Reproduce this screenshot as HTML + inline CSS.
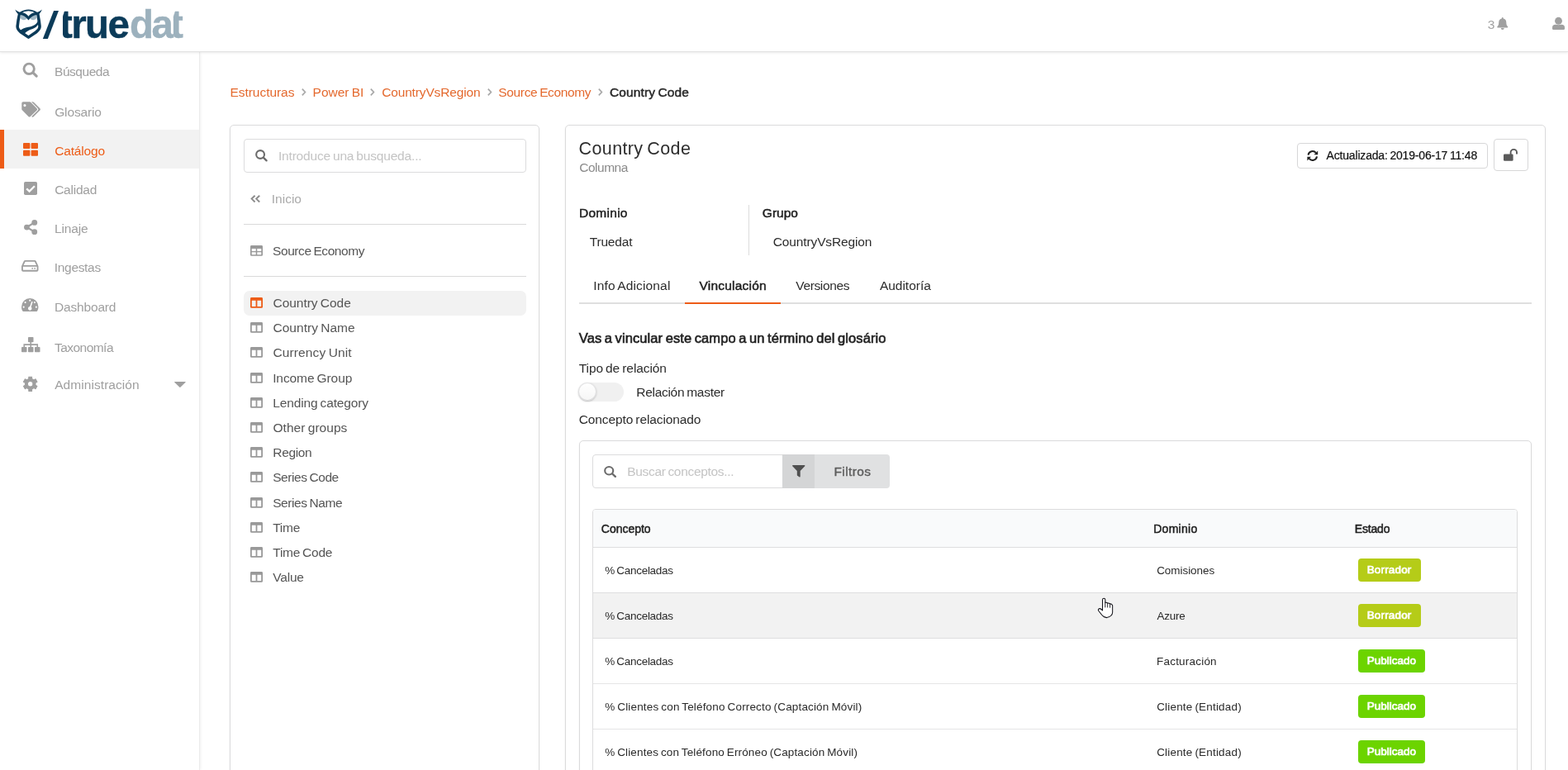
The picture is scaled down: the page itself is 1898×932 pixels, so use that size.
<!DOCTYPE html>
<html lang="es"><head><meta charset="utf-8"><title>truedat - Country Code</title>
<style>
*{box-sizing:border-box}
html,body{margin:0;padding:0;overflow:hidden}
#app{position:absolute;left:0;top:0;width:1898px;height:932px;overflow:hidden;will-change:transform}
body{width:1898px;height:932px;overflow:hidden;position:relative;background:#fff;font-family:'Liberation Sans',sans-serif;color:#222;-webkit-font-smoothing:antialiased}
ul,li,h1,h2,p,table,tr,td,th,thead,tbody,nav,header,main,section,aside,a,label,button{margin:0;padding:0;border:0;background:none;font:inherit;color:inherit;text-decoration:none;list-style:none;display:block;position:static}
.t{position:absolute;white-space:nowrap;line-height:1;display:block;word-spacing:-0.07em}
.b{position:absolute;display:block}
.i{position:absolute;display:block;fill:currentColor;overflow:visible}
.seg{background:#fff;border:1px solid #dbdbdc;border-radius:5px;box-shadow:0 1px 2px 0 rgba(34,36,38,.08)}
.inp{background:#fff;border:1px solid #dcdcdd;border-radius:4px}
.hl{background:#d9d9da}
</style></head>
<body>
<div id="app">
<nav><div class="b" style="left:0px;top:63px;width:241px;height:869px;border-right:1px solid #ececec;width:242px;box-shadow:1px 0 3px rgba(0,0,0,.06);background:#fff;"></div><div class="b" style="left:0px;top:157px;width:241px;height:47px;background:#f2f2f2;border-left:5px solid #ed5c17;"></div><ul><li><a><svg class="i" style="left:27.5px;top:76.2px;width:18.0px;height:18.0px;color:#9f9f9f;" viewBox="0 0 18 18" preserveAspectRatio="none" aria-hidden="true"><circle cx="7.15" cy="7.3" r="6.2" fill="none" stroke="currentColor" stroke-width="2.9"/><path d="M12.1 12.1 L16.2 16.2" stroke="currentColor" stroke-width="3.1" stroke-linecap="round"/></svg><span class="t" style="left:66.02px;top:79px;font-size:15.5px;letter-spacing:-0.46px;color:#9f9f9f;">Búsqueda</span></a></li><li><a><svg class="i" style="left:25.5px;top:122.8px;width:23.0px;height:18.3px;color:#9f9f9f;" viewBox="0 0 23 18" preserveAspectRatio="none" aria-hidden="true"><path fill-rule="evenodd" fill="currentColor" d="M.3 1.8 A1.6 1.6 0 0 1 1.9 .2 H10 a1.7 1.7 0 0 1 1.2 .5 L18.6 8 a1.7 1.7 0 0 1 0 2.4 L10.8 17.7 a1.7 1.7 0 0 1 -2.4 0 L.8 10.1 A1.7 1.7 0 0 1 .3 8.9 Z M3.95 2.9 a1.6 1.6 0 1 0 0 3.2 a1.6 1.6 0 1 0 0 -3.2 Z"/><path fill="currentColor" d="M12 .2 h1.7 a1.7 1.7 0 0 1 1.2 .5 L22.4 8 a1.7 1.7 0 0 1 0 2.4 L14.9 17.7 a1.7 1.7 0 0 1 -2.6 -.1 L19.7 10.6 a2 2 0 0 0 0 -2.8 Z"/></svg><span class="t" style="left:66.16px;top:128px;font-size:15.5px;letter-spacing:-0.13px;color:#9f9f9f;">Glosario</span></a></li><li><a><svg class="i" style="left:27.5px;top:173.2px;width:18.0px;height:15.8px;color:#ed5c17;" viewBox="0 0 18 16" preserveAspectRatio="none" aria-hidden="true"><rect x="0" y="0" width="8.4" height="7.2" rx="1"/><rect x="9.6" y="0" width="8.4" height="7.2" rx="1"/><rect x="0" y="8.8" width="8.4" height="7.2" rx="1"/><rect x="9.6" y="8.8" width="8.4" height="7.2" rx="1"/></svg><span class="t" style="left:66.17px;top:175px;font-size:15.5px;letter-spacing:-0.17px;color:#ed5c17;">Catálogo</span></a></li><li><a><svg class="i" style="left:29px;top:220px;width:16.0px;height:16.0px;color:#9f9f9f;" viewBox="0 0 16 16" preserveAspectRatio="none" aria-hidden="true"><rect x="0" y="0" width="16" height="16" rx="1.8" fill="currentColor"/><path d="M3.2 8.3 L6.6 11.6 L12.9 5.2" fill="none" stroke="#fff" stroke-width="2.3"/></svg><span class="t" style="left:66.17px;top:222px;font-size:15.5px;letter-spacing:-0.24px;color:#9f9f9f;">Calidad</span></a></li><li><a><svg class="i" style="left:28.8px;top:266px;width:16.2px;height:18.1px;color:#9f9f9f;" viewBox="0 0 16 18" preserveAspectRatio="none" aria-hidden="true"><circle cx="3.4" cy="9" r="3.4"/><circle cx="12.6" cy="3.4" r="3.4"/><circle cx="12.6" cy="14.6" r="3.4"/><path d="M3.4 9 L12.6 3.4 M3.4 9 L12.6 14.6" stroke="currentColor" stroke-width="2.2" fill="none"/></svg><span class="t" style="left:66.02px;top:269px;font-size:15.5px;letter-spacing:-0.17px;color:#9f9f9f;">Linaje</span></a></li><li><a><svg class="i" style="left:26.2px;top:315.2px;width:20.5px;height:13.7px;color:#9f9f9f;" viewBox="0 0 21 14" preserveAspectRatio="none" aria-hidden="true"><path fill-rule="evenodd" d="M4.6 0 H16.4 a2 2 0 0 1 1.7 1 L20.7 6.6 a2.2 2.2 0 0 1 .3 1 V12 a2 2 0 0 1 -2 2 H2 a2 2 0 0 1 -2 -2 V7.6 a2.2 2.2 0 0 1 .3 -1 L2.9 1 A2 2 0 0 1 4.6 0 Z M4.9 1.9 a.4.4 0 0 0 -.3 .2 L2.6 6.1 H18.4 L16.4 2.1 a.4.4 0 0 0 -.3 -.2 Z M1.9 8 V11.8 a.3.3 0 0 0 .3 .3 H18.8 a.3.3 0 0 0 .3 -.3 V8 Z M13.5 9.1 a1 1 0 1 0 0 2 a1 1 0 1 0 0 -2 Z M16.5 9.1 a1 1 0 1 0 0 2 a1 1 0 1 0 0 -2 Z"/></svg><span class="t" style="left:65.85px;top:316px;font-size:15.5px;letter-spacing:-0.33px;color:#9f9f9f;">Ingestas</span></a></li><li><a><svg class="i" style="left:26.2px;top:361.2px;width:20.5px;height:16.0px;color:#9f9f9f;" viewBox="0 0 21 16" preserveAspectRatio="none" aria-hidden="true"><path fill-rule="evenodd" d="M10.5 0 A10.5 10.5 0 0 0 0 10.5 c0 1.9 .5 3.6 1.4 5.1 a.9.9 0 0 0 .8 .4 H18.8 a.9.9 0 0 0 .8 -.4 A10 10 0 0 0 21 10.5 A10.5 10.5 0 0 0 10.5 0 Z M10.5 1.6 a1.1 1.1 0 1 1 0 2.2 a1.1 1.1 0 1 1 0 -2.2 Z M4.7 4 a1.1 1.1 0 1 1 0 2.2 a1.1 1.1 0 1 1 0 -2.2 Z M16.3 4 a1.1 1.1 0 1 1 0 2.2 a1.1 1.1 0 1 1 0 -2.2 Z M2.7 9.6 a1.1 1.1 0 1 1 0 2.2 a1.1 1.1 0 1 1 0 -2.2 Z M18.3 9.6 a1.1 1.1 0 1 1 0 2.2 a1.1 1.1 0 1 1 0 -2.2 Z M12.4 4.3 a.8.8 0 0 1 1.5 .5 L11.9 10.6 a2.3 2.3 0 1 1 -1.5 -.5 Z"/></svg><span class="t" style="left:66.02px;top:364px;font-size:15.5px;letter-spacing:-0.17px;color:#9f9f9f;">Dashboard</span></a></li><li><a><svg class="i" style="left:25.8px;top:407.9px;width:22.5px;height:18.3px;color:#9f9f9f;" viewBox="0 0 22.5 18" preserveAspectRatio="none" aria-hidden="true"><rect x="8" y="0" width="6.5" height="6.2" rx=".8"/><rect x="0" y="11.8" width="6.5" height="6.2" rx=".8"/><rect x="8" y="11.8" width="6.5" height="6.2" rx=".8"/><rect x="16" y="11.8" width="6.5" height="6.2" rx=".8"/><path d="M11.25 6 V12 M3.25 12 V9 H19.25 V12" fill="none" stroke="currentColor" stroke-width="1.6"/></svg><span class="t" style="left:65.94px;top:413px;font-size:15.5px;letter-spacing:-0.53px;color:#9f9f9f;">Taxonomía</span></a></li><li><a><svg class="i" style="left:27.9px;top:456.4px;width:17.4px;height:17.6px;color:#9f9f9f;" viewBox="0 0 17.5 17.5" preserveAspectRatio="none" aria-hidden="true"><path fill-rule="evenodd" stroke="currentColor" stroke-width="1" stroke-linejoin="round" d="M6.78 0.22 L10.72 0.22 L10.65 2.53 L13.18 4.00 L15.15 2.78 L17.12 6.19 L15.08 7.29 L15.08 10.21 L17.12 11.31 L15.15 14.72 L13.18 13.50 L10.65 14.97 L10.72 17.28 L6.78 17.28 L6.85 14.97 L4.32 13.50 L2.35 14.72 L0.38 11.31 L2.42 10.21 L2.42 7.29 L0.38 6.19 L2.35 2.78 L4.32 4.00 L6.85 2.53 Z M8.75 5.55 a3.2 3.2 0 1 0 0 6.4 a3.2 3.2 0 1 0 0 -6.4 Z"/></svg><span class="t" style="left:66.23px;top:458px;font-size:15.5px;letter-spacing:0.06px;color:#9f9f9f;">Administración</span></a></li></ul><svg class="i" style="left:211.2px;top:461.9px;width:13.8px;height:7.0px;color:#9f9f9f;" viewBox="0 0 14 7" preserveAspectRatio="none" aria-hidden="true"><path d="M.6 0 H13.4 a.5.5 0 0 1 .35 .85 L7.4 6.8 a.55.55 0 0 1 -.8 0 L.25 .85 A.5.5 0 0 1 .6 0 Z"/></svg></nav>
<header><div class="b" style="left:0px;top:0px;width:1898px;height:62px;background:#fff;border-bottom:1px solid #e2e2e2;height:63px;box-shadow:0 1px 3px rgba(0,0,0,.09);"></div><svg class="i" style="left:17.8px;top:10.7px;width:33.2px;height:36.5px;" viewBox="140 120 595 655" preserveAspectRatio="none" aria-hidden="true"><g fill="#0b3b59"><path fill="none" stroke="#0b3b59" stroke-width="64" stroke-linejoin="round" d="M242 222 C219 320 204 410 196 495 C194 545 229 588 273 622 L435 732 L597 622 C641 588 681 545 679 495 C671 410 656 320 636 222"/><path fill="none" stroke="#0b3b59" stroke-width="34" d="M245 209 Q435 80 625 209"/><path d="M145 130 C185 165 220 185 264 192 L232 252 C195 218 165 178 145 130 Z M730 130 C690 165 655 185 611 192 L643 252 C680 218 710 178 730 130 Z"/><path fill="#a3b9c6" d="M255 250 L415 250 L415 300 C400 340 360 358 330 356 C290 354 262 330 255 290 Z M615 250 L455 250 L455 300 C470 340 510 358 540 356 C580 354 608 330 615 290 Z"/><path d="M248 193 C330 188 395 223 435 278 C475 223 540 188 627 193 L632 246 C550 244 490 284 435 364 C380 284 320 244 243 246 Z"/><path d="M642 370 C612 462 520 494 430 509 C350 524 288 550 236 600 L345 655 C400 597 452 568 512 553 C584 533 636 488 662 420 Z"/></g></svg><span class="t" style="left:55.44px;top:8px;font-size:45.5px;font-weight:700;color:#0b3b59;transform:skewX(-10deg) scaleX(1.12);transform-origin:50% 50%;">/</span><span class="t" style="left:72.12px;top:6px;font-size:47.5px;font-weight:700;letter-spacing:-1.68px;color:#0b3b59;-webkit-text-stroke:0.4px #0b3b59;clip-path:inset(-5px -5px -5px 3.9px);">true</span><span class="t" style="left:156.9px;top:6px;font-size:47.5px;font-weight:700;letter-spacing:-2.45px;color:#9cb1bd;-webkit-text-stroke:0.4px #9cb1bd;">da<span style="display:inline-block;margin-left:-1.5px;clip-path:inset(-5px -5px -5px 3.9px);">t</span></span><span class="t" style="left:1800.73px;top:22px;font-size:15.5px;color:#a3a3a3;">3</span><svg class="i" style="left:1812px;top:21px;width:13.5px;height:15.0px;color:#a0a0a0;" viewBox="0 0 14 15" preserveAspectRatio="none" aria-hidden="true"><path d="M7 0 a1 1 0 0 1 1 1 v.5 a4.7 4.7 0 0 1 3.7 4.5 c0 2.9 .7 3.9 1.8 5 a.95.95 0 0 1 -.7 1.6 H1.2 a.95.95 0 0 1 -.7 -1.6 C1.6 9.9 2.3 8.9 2.3 6 A4.7 4.7 0 0 1 6 1.5 V1 a1 1 0 0 1 1 -1 Z M5 12.9 h4 a2 2 0 0 1 -4 0 Z"/></svg><svg class="i" style="left:1879px;top:21px;width:15.0px;height:15.0px;color:#a0a0a0;" viewBox="0 0 15 15" preserveAspectRatio="none" aria-hidden="true"><path d="M0 13.4 v-.9 a3.7 3.7 0 0 1 3.7 -3.7 h7.6 a3.7 3.7 0 0 1 3.7 3.7 v.9 a1.5 1.5 0 0 1 -1.5 1.5 h-12 a1.5 1.5 0 0 1 -1.5 -1.5 z"/><circle cx="7.5" cy="4.3" r="4.9" fill="#fff"/><circle cx="7.5" cy="4.3" r="4.45"/></svg></header>
<main>
<nav><a class="t" style="left:278.52px;top:104px;font-size:15.5px;letter-spacing:-0.05px;color:#e4692e;">Estructuras</a><a class="t" style="left:378.62px;top:104px;font-size:15.5px;letter-spacing:-0.01px;color:#e4692e;">Power BI</a><a class="t" style="left:462.17px;top:104px;font-size:15.5px;letter-spacing:-0.15px;color:#e4692e;">CountryVsRegion</a><a class="t" style="left:603.33px;top:104px;font-size:15.5px;letter-spacing:-0.36px;color:#e4692e;">Source Economy</a><svg class="i" style="left:365px;top:107.2px;width:5.4px;height:9.0px;color:#a8a8a8;" viewBox="0 0 5.4 9" preserveAspectRatio="none" aria-hidden="true"><path fill="none" stroke="currentColor" stroke-width="1.7" d="M.8 .7 L4.4 4.5 L.8 8.3"/></svg><svg class="i" style="left:448.3px;top:107.2px;width:5.4px;height:9.0px;color:#a8a8a8;" viewBox="0 0 5.4 9" preserveAspectRatio="none" aria-hidden="true"><path fill="none" stroke="currentColor" stroke-width="1.7" d="M.8 .7 L4.4 4.5 L.8 8.3"/></svg><svg class="i" style="left:589.5px;top:107.2px;width:5.4px;height:9.0px;color:#a8a8a8;" viewBox="0 0 5.4 9" preserveAspectRatio="none" aria-hidden="true"><path fill="none" stroke="currentColor" stroke-width="1.7" d="M.8 .7 L4.4 4.5 L.8 8.3"/></svg><svg class="i" style="left:724px;top:107.2px;width:5.4px;height:9.0px;color:#a8a8a8;" viewBox="0 0 5.4 9" preserveAspectRatio="none" aria-hidden="true"><path fill="none" stroke="currentColor" stroke-width="1.7" d="M.8 .7 L4.4 4.5 L.8 8.3"/></svg><span class="t" style="left:737.97px;top:104px;font-size:15.5px;letter-spacing:0.13px;color:#2a2a2a;-webkit-text-stroke:0.5px #2a2a2a;">Country Code</span></nav>
<aside><div class="b seg" style="left:278px;top:151px;width:375px;height:809px;"></div><div class="b inp" style="left:295px;top:168px;width:342px;height:41px;"></div><svg class="i" style="left:309px;top:181.2px;width:15.0px;height:14.8px;color:#6c6c6c;" viewBox="0 0 18 18" preserveAspectRatio="none" aria-hidden="true"><circle cx="7.3" cy="7.3" r="5.9" fill="none" stroke="currentColor" stroke-width="2.5"/><path d="M12 12 L16.3 16.3" stroke="currentColor" stroke-width="2.8" stroke-linecap="round"/></svg><span class="t" style="left:336.95px;top:181px;font-size:15.5px;letter-spacing:-0.18px;color:#c4c4c4;">Introduce una busqueda...</span><svg class="i" style="left:303.3px;top:235.8px;width:12.4px;height:9.2px;color:#8c8c8c;" viewBox="0 0 12.4 9.2" preserveAspectRatio="none" aria-hidden="true"><path fill="none" stroke="currentColor" stroke-width="1.9" d="M5.6 .7 L1.6 4.6 L5.6 8.5 M11.2 .7 L7.2 4.6 L11.2 8.5"/></svg><a class="t" style="left:328.75px;top:233px;font-size:15.5px;letter-spacing:0.01px;color:#aaa;">Inicio</a><div class="b hl" style="left:295px;top:271px;width:342px;height:1px;"></div><svg class="i" style="left:302.8px;top:297px;width:15.0px;height:12.8px;color:#999;" viewBox="0 0 15 13" preserveAspectRatio="none" aria-hidden="true"><path fill-rule="evenodd" d="M1.4 0 H13.6 A1.4 1.4 0 0 1 15 1.4 V11.6 A1.4 1.4 0 0 1 13.6 13 H1.4 A1.4 1.4 0 0 1 0 11.6 V1.4 A1.4 1.4 0 0 1 1.4 0 Z M1.7 4 V7 H6.7 V4 Z M8.3 4 V7 H13.3 V4 Z M1.7 8.5 V11.4 H6.7 V8.5 Z M8.3 8.5 V11.4 H13.3 V8.5 Z"/></svg><a class="t" style="left:330.03px;top:296px;font-size:15.5px;letter-spacing:-0.42px;color:#555;">Source Economy</a><div class="b hl" style="left:295px;top:334px;width:342px;height:1px;"></div><div class="b" style="left:295px;top:352px;width:342px;height:30px;background:#f2f2f2;border-radius:7px;"></div><ul><li><svg class="i" style="left:302.8px;top:360px;width:15.0px;height:12.8px;color:#ed5c17;" viewBox="0 0 15 13" preserveAspectRatio="none" aria-hidden="true"><path fill-rule="evenodd" d="M1.4 0 H13.6 A1.4 1.4 0 0 1 15 1.4 V11.6 A1.4 1.4 0 0 1 13.6 13 H1.4 A1.4 1.4 0 0 1 0 11.6 V1.4 A1.4 1.4 0 0 1 1.4 0 Z M1.8 3.7 V11.2 H6.6 V3.7 Z M8.4 3.7 V11.2 H13.2 V3.7 Z"/></svg><a class="t" style="left:330.47px;top:359px;font-size:15.5px;letter-spacing:-0.02px;color:#555;">Country Code</a></li><li><svg class="i" style="left:302.8px;top:390px;width:15.0px;height:12.8px;color:#999;" viewBox="0 0 15 13" preserveAspectRatio="none" aria-hidden="true"><path fill-rule="evenodd" d="M1.4 0 H13.6 A1.4 1.4 0 0 1 15 1.4 V11.6 A1.4 1.4 0 0 1 13.6 13 H1.4 A1.4 1.4 0 0 1 0 11.6 V1.4 A1.4 1.4 0 0 1 1.4 0 Z M1.8 3.7 V11.2 H6.6 V3.7 Z M8.4 3.7 V11.2 H13.2 V3.7 Z"/></svg><a class="t" style="left:330.47px;top:389px;font-size:15.5px;letter-spacing:0.03px;color:#555;">Country Name</a></li><li><svg class="i" style="left:302.8px;top:420px;width:15.0px;height:12.8px;color:#999;" viewBox="0 0 15 13" preserveAspectRatio="none" aria-hidden="true"><path fill-rule="evenodd" d="M1.4 0 H13.6 A1.4 1.4 0 0 1 15 1.4 V11.6 A1.4 1.4 0 0 1 13.6 13 H1.4 A1.4 1.4 0 0 1 0 11.6 V1.4 A1.4 1.4 0 0 1 1.4 0 Z M1.8 3.7 V11.2 H6.6 V3.7 Z M8.4 3.7 V11.2 H13.2 V3.7 Z"/></svg><a class="t" style="left:330.47px;top:419px;font-size:15.5px;letter-spacing:0.12px;color:#555;">Currency Unit</a></li><li><svg class="i" style="left:302.8px;top:451px;width:15.0px;height:12.8px;color:#999;" viewBox="0 0 15 13" preserveAspectRatio="none" aria-hidden="true"><path fill-rule="evenodd" d="M1.4 0 H13.6 A1.4 1.4 0 0 1 15 1.4 V11.6 A1.4 1.4 0 0 1 13.6 13 H1.4 A1.4 1.4 0 0 1 0 11.6 V1.4 A1.4 1.4 0 0 1 1.4 0 Z M1.8 3.7 V11.2 H6.6 V3.7 Z M8.4 3.7 V11.2 H13.2 V3.7 Z"/></svg><a class="t" style="left:330.15px;top:450px;font-size:15.5px;letter-spacing:-0.09px;color:#555;">Income Group</a></li><li><svg class="i" style="left:302.8px;top:481px;width:15.0px;height:12.8px;color:#999;" viewBox="0 0 15 13" preserveAspectRatio="none" aria-hidden="true"><path fill-rule="evenodd" d="M1.4 0 H13.6 A1.4 1.4 0 0 1 15 1.4 V11.6 A1.4 1.4 0 0 1 13.6 13 H1.4 A1.4 1.4 0 0 1 0 11.6 V1.4 A1.4 1.4 0 0 1 1.4 0 Z M1.8 3.7 V11.2 H6.6 V3.7 Z M8.4 3.7 V11.2 H13.2 V3.7 Z"/></svg><a class="t" style="left:330.32px;top:480px;font-size:15.5px;letter-spacing:-0.14px;color:#555;">Lending category</a></li><li><svg class="i" style="left:302.8px;top:511px;width:15.0px;height:12.8px;color:#999;" viewBox="0 0 15 13" preserveAspectRatio="none" aria-hidden="true"><path fill-rule="evenodd" d="M1.4 0 H13.6 A1.4 1.4 0 0 1 15 1.4 V11.6 A1.4 1.4 0 0 1 13.6 13 H1.4 A1.4 1.4 0 0 1 0 11.6 V1.4 A1.4 1.4 0 0 1 1.4 0 Z M1.8 3.7 V11.2 H6.6 V3.7 Z M8.4 3.7 V11.2 H13.2 V3.7 Z"/></svg><a class="t" style="left:330.51px;top:510px;font-size:15.5px;letter-spacing:0.04px;color:#555;">Other groups</a></li><li><svg class="i" style="left:302.8px;top:541px;width:15.0px;height:12.8px;color:#999;" viewBox="0 0 15 13" preserveAspectRatio="none" aria-hidden="true"><path fill-rule="evenodd" d="M1.4 0 H13.6 A1.4 1.4 0 0 1 15 1.4 V11.6 A1.4 1.4 0 0 1 13.6 13 H1.4 A1.4 1.4 0 0 1 0 11.6 V1.4 A1.4 1.4 0 0 1 1.4 0 Z M1.8 3.7 V11.2 H6.6 V3.7 Z M8.4 3.7 V11.2 H13.2 V3.7 Z"/></svg><a class="t" style="left:330.32px;top:540px;font-size:15.5px;letter-spacing:-0.37px;color:#555;">Region</a></li><li><svg class="i" style="left:302.8px;top:571px;width:15.0px;height:12.8px;color:#999;" viewBox="0 0 15 13" preserveAspectRatio="none" aria-hidden="true"><path fill-rule="evenodd" d="M1.4 0 H13.6 A1.4 1.4 0 0 1 15 1.4 V11.6 A1.4 1.4 0 0 1 13.6 13 H1.4 A1.4 1.4 0 0 1 0 11.6 V1.4 A1.4 1.4 0 0 1 1.4 0 Z M1.8 3.7 V11.2 H6.6 V3.7 Z M8.4 3.7 V11.2 H13.2 V3.7 Z"/></svg><a class="t" style="left:330.13px;top:570px;font-size:15.5px;letter-spacing:-0.41px;color:#555;">Series Code</a></li><li><svg class="i" style="left:302.8px;top:602px;width:15.0px;height:12.8px;color:#999;" viewBox="0 0 15 13" preserveAspectRatio="none" aria-hidden="true"><path fill-rule="evenodd" d="M1.4 0 H13.6 A1.4 1.4 0 0 1 15 1.4 V11.6 A1.4 1.4 0 0 1 13.6 13 H1.4 A1.4 1.4 0 0 1 0 11.6 V1.4 A1.4 1.4 0 0 1 1.4 0 Z M1.8 3.7 V11.2 H6.6 V3.7 Z M8.4 3.7 V11.2 H13.2 V3.7 Z"/></svg><a class="t" style="left:330.13px;top:601px;font-size:15.5px;letter-spacing:-0.41px;color:#555;">Series Name</a></li><li><svg class="i" style="left:302.8px;top:632px;width:15.0px;height:12.8px;color:#999;" viewBox="0 0 15 13" preserveAspectRatio="none" aria-hidden="true"><path fill-rule="evenodd" d="M1.4 0 H13.6 A1.4 1.4 0 0 1 15 1.4 V11.6 A1.4 1.4 0 0 1 13.6 13 H1.4 A1.4 1.4 0 0 1 0 11.6 V1.4 A1.4 1.4 0 0 1 1.4 0 Z M1.8 3.7 V11.2 H6.6 V3.7 Z M8.4 3.7 V11.2 H13.2 V3.7 Z"/></svg><a class="t" style="left:330.24px;top:631px;font-size:15.5px;letter-spacing:-0.26px;color:#555;">Time</a></li><li><svg class="i" style="left:302.8px;top:662px;width:15.0px;height:12.8px;color:#999;" viewBox="0 0 15 13" preserveAspectRatio="none" aria-hidden="true"><path fill-rule="evenodd" d="M1.4 0 H13.6 A1.4 1.4 0 0 1 15 1.4 V11.6 A1.4 1.4 0 0 1 13.6 13 H1.4 A1.4 1.4 0 0 1 0 11.6 V1.4 A1.4 1.4 0 0 1 1.4 0 Z M1.8 3.7 V11.2 H6.6 V3.7 Z M8.4 3.7 V11.2 H13.2 V3.7 Z"/></svg><a class="t" style="left:330.24px;top:661px;font-size:15.5px;letter-spacing:-0.25px;color:#555;">Time Code</a></li><li><svg class="i" style="left:302.8px;top:692px;width:15.0px;height:12.8px;color:#999;" viewBox="0 0 15 13" preserveAspectRatio="none" aria-hidden="true"><path fill-rule="evenodd" d="M1.4 0 H13.6 A1.4 1.4 0 0 1 15 1.4 V11.6 A1.4 1.4 0 0 1 13.6 13 H1.4 A1.4 1.4 0 0 1 0 11.6 V1.4 A1.4 1.4 0 0 1 1.4 0 Z M1.8 3.7 V11.2 H6.6 V3.7 Z M8.4 3.7 V11.2 H13.2 V3.7 Z"/></svg><a class="t" style="left:330.30px;top:691px;font-size:15.5px;letter-spacing:-0.21px;color:#555;">Value</a></li></ul></aside>
<section><div class="b seg" style="left:684px;top:151px;width:1187px;height:809px;"></div><h1 class="t" style="left:700.55px;top:170px;font-size:21.5px;letter-spacing:0.38px;color:#2e2e2e;">Country Code</h1><span class="t" style="left:701.17px;top:195px;font-size:15.5px;letter-spacing:-0.47px;color:#8a8a8a;">Columna</span><div class="b" style="left:1570px;top:173px;width:231px;height:31px;border:1px solid #d7d7d8;border-radius:4px;background:#fff;"></div><svg class="i" style="left:1581.8px;top:182px;width:13.6px;height:13.0px;color:#222;" viewBox="0 0 14 13" preserveAspectRatio="none" aria-hidden="true"><path fill="none" stroke="currentColor" stroke-width="2.1" d="M1.6 5.6 A5.5 5.5 0 0 1 11.3 3.1 M12.4 7.4 A5.5 5.5 0 0 1 2.7 9.9"/><path d="M13.6 .4 V5.2 H8.8 Z M.4 12.6 V7.8 H5.2 Z"/></svg><span class="t" style="left:1605.55px;top:181px;font-size:14px;letter-spacing:-0.18px;color:#111;-webkit-text-stroke:0.2px #111;">Actualizada: 2019-06-17 11:48</span><div class="b" style="left:1808px;top:168px;width:42px;height:39px;border:1px solid #d7d7d8;border-radius:4px;background:#fff;"></div><svg class="i" style="left:1820.3px;top:180.2px;width:17.0px;height:14.8px;color:#5a5a5a;" viewBox="0 0 17 15" preserveAspectRatio="none" aria-hidden="true"><rect x="0" y="6.6" width="11.6" height="8.4" rx="1.3"/><path fill="none" stroke="currentColor" stroke-width="1.9" d="M8.6 7 V4.6 a3.7 3.7 0 0 1 7.4 0 V6.6"/></svg><span class="t" style="left:701.02px;top:250px;font-size:15.5px;letter-spacing:0.27px;color:#222;-webkit-text-stroke:0.5px #222;">Dominio</span><span class="t" style="left:713.74px;top:285px;font-size:15.5px;letter-spacing:-0.19px;color:#2c2c2c;">Truedat</span><div class="b" style="left:906px;top:248px;width:1px;height:61px;background:#dcdcdc;"></div><span class="t" style="left:922.86px;top:250px;font-size:15.5px;letter-spacing:-0.02px;color:#222;-webkit-text-stroke:0.5px #222;">Grupo</span><span class="t" style="left:935.77px;top:285px;font-size:15.5px;letter-spacing:-0.13px;color:#2c2c2c;">CountryVsRegion</span><div class="b" style="left:701px;top:366px;width:1153px;height:2px;background:#dfdfdf;"></div><div class="b" style="left:829px;top:366px;width:116px;height:2px;background:#ed5c17;"></div><a class="t" style="left:718.25px;top:338px;font-size:15.5px;letter-spacing:0.15px;color:#2c2c2c;">Info Adicional</a><a class="t" style="left:846.60px;top:338px;font-size:15.5px;letter-spacing:0.20px;color:#222;-webkit-text-stroke:0.5px #222;">Vinculación</a><a class="t" style="left:963.30px;top:338px;font-size:15.5px;letter-spacing:-0.36px;color:#2c2c2c;">Versiones</a><a class="t" style="left:1064.93px;top:338px;font-size:15.5px;letter-spacing:-0.02px;color:#2c2c2c;">Auditoría</a><h2 class="t" style="left:700.81px;top:401px;font-size:16.5px;letter-spacing:0.09px;color:#222;-webkit-text-stroke:0.6px #222;">Vas a vincular este campo a un término del glosário</h2><label class="t" style="left:700.74px;top:438px;font-size:15.5px;letter-spacing:-0.09px;color:#2c2c2c;">Tipo de relación</label><div class="b" style="left:700.4px;top:463.3px;width:54.6px;height:22.5px;background:#f0f0f0;border-radius:11.5px;"></div><div class="b" style="left:700.2px;top:463.3px;width:22.2px;height:22.2px;background:linear-gradient(#fff,#f6f6f6);border-radius:50%;box-shadow:0 1px 2px rgba(34,36,38,.25),0 0 0 1px rgba(34,36,38,.12) inset;"></div><label class="t" style="left:770.22px;top:467px;font-size:15.5px;letter-spacing:-0.28px;color:#2c2c2c;">Relación master</label><label class="t" style="left:700.67px;top:500px;font-size:15.5px;letter-spacing:-0.10px;color:#2c2c2c;">Concepto relacionado</label><div class="b seg" style="left:701px;top:533px;width:1153px;height:427px;"></div><div class="b inp" style="left:717px;top:550px;width:231px;height:41px;border-radius:4px 0 0 4px;"></div><svg class="i" style="left:731px;top:563.5px;width:15.3px;height:14.2px;color:#6c6c6c;" viewBox="0 0 18 18" preserveAspectRatio="none" aria-hidden="true"><circle cx="7.3" cy="7.3" r="5.9" fill="none" stroke="currentColor" stroke-width="2.5"/><path d="M12 12 L16.3 16.3" stroke="currentColor" stroke-width="2.8" stroke-linecap="round"/></svg><span class="t" style="left:759.22px;top:563px;font-size:15.5px;letter-spacing:-0.32px;color:#c4c4c4;">Buscar conceptos...</span><div class="b" style="left:947px;top:550px;width:39px;height:41px;background:#d4d5d6;"></div><div class="b" style="left:986px;top:550px;width:91px;height:41px;background:#e0e1e2;border-radius:0 4px 4px 0;"></div><svg class="i" style="left:958.8px;top:563px;width:15.5px;height:14.7px;color:#4f4f4f;" viewBox="0 0 15.5 15" preserveAspectRatio="none" aria-hidden="true"><path d="M.9 0 H14.6 a.8.8 0 0 1 .6 1.4 L9.7 7.2 V13.9 a.8.8 0 0 1 -1.3 .7 L6.2 13 a.9.9 0 0 1 -.4 -.7 V7.2 L.3 1.4 A.8.8 0 0 1 .9 0 Z"/></svg><span class="t" style="left:1009.52px;top:563px;font-size:15.5px;letter-spacing:0.39px;color:#5c5c5c;-webkit-text-stroke:0.35px #5c5c5c;">Filtros</span><div class="b" style="left:717px;top:616px;width:1120px;height:344px;border:1px solid #dcdcdd;border-radius:4px;background:#fff;"></div><div class="b" style="left:718px;top:617px;width:1118px;height:45px;background:#f9fafb;border-radius:3px 3px 0 0;"></div><div class="b" style="left:718px;top:718px;width:1118px;height:54px;background:#f2f2f2;"></div><div class="b" style="left:718px;top:662px;width:1118px;height:1px;background:#dededf;"></div><div class="b" style="left:718px;top:717px;width:1118px;height:1px;background:#dededf;"></div><div class="b" style="left:718px;top:772px;width:1118px;height:1px;background:#dededf;"></div><div class="b" style="left:718px;top:827px;width:1118px;height:1px;background:#e5e5e6;"></div><div class="b" style="left:718px;top:882px;width:1118px;height:1px;background:#e5e5e6;"></div><table><thead><tr><th class="t" style="left:727.84px;top:633px;font-size:14px;letter-spacing:-0.02px;color:#222;-webkit-text-stroke:0.5px #222;">Concepto</th><th class="t" style="left:1396.22px;top:633px;font-size:14px;letter-spacing:0.27px;color:#222;-webkit-text-stroke:0.5px #222;">Dominio</th><th class="t" style="left:1639.82px;top:633px;font-size:14px;letter-spacing:-0.18px;color:#222;-webkit-text-stroke:0.5px #222;">Estado</th></tr></thead><tbody><tr><td class="t" style="left:732.16px;top:684px;font-size:13.5px;letter-spacing:-0.30px;color:#2a2a2a;">% Canceladas</td><td class="t" style="left:1400.17px;top:684px;font-size:13.5px;letter-spacing:-0.05px;color:#2a2a2a;">Comisiones</td><td><div class="b" style="left:1644.2px;top:676.3px;width:75.8px;height:27.5px;background:#b5cc18;border-radius:4px;"></div><span class="t" style="left:1654.67px;top:683px;font-size:13.5px;letter-spacing:0.17px;color:#fff;-webkit-text-stroke:0.7px #fff;">Borrador</span></td></tr><tr><td class="t" style="left:732.16px;top:739px;font-size:13.5px;letter-spacing:-0.30px;color:#2a2a2a;">% Canceladas</td><td class="t" style="left:1400.44px;top:739px;font-size:13.5px;letter-spacing:-0.21px;color:#2a2a2a;">Azure</td><td><div class="b" style="left:1644.2px;top:731.3px;width:75.8px;height:27.5px;background:#b5cc18;border-radius:4px;"></div><span class="t" style="left:1654.67px;top:738px;font-size:13.5px;letter-spacing:0.17px;color:#fff;-webkit-text-stroke:0.7px #fff;">Borrador</span></td></tr><tr><td class="t" style="left:732.16px;top:794px;font-size:13.5px;letter-spacing:-0.30px;color:#2a2a2a;">% Canceladas</td><td class="t" style="left:1400.07px;top:794px;font-size:13.5px;letter-spacing:0.20px;color:#2a2a2a;">Facturación</td><td><div class="b" style="left:1644.2px;top:786.3px;width:80.8px;height:27.5px;background:#6cd400;border-radius:4px;"></div><span class="t" style="left:1654.67px;top:793px;font-size:13.5px;letter-spacing:0.02px;color:#fff;-webkit-text-stroke:0.7px #fff;">Publicado</span></td></tr><tr><td class="t" style="left:732.16px;top:849px;font-size:13.5px;letter-spacing:0.16px;color:#2a2a2a;">% Clientes con Teléfono Correcto (Captación Móvil)</td><td class="t" style="left:1400.17px;top:849px;font-size:13.5px;letter-spacing:0.18px;color:#2a2a2a;">Cliente (Entidad)</td><td><div class="b" style="left:1644.2px;top:841.3px;width:80.8px;height:27.5px;background:#6cd400;border-radius:4px;"></div><span class="t" style="left:1654.67px;top:848px;font-size:13.5px;letter-spacing:0.02px;color:#fff;-webkit-text-stroke:0.7px #fff;">Publicado</span></td></tr><tr><td class="t" style="left:732.16px;top:904px;font-size:13.5px;letter-spacing:0.13px;color:#2a2a2a;">% Clientes con Teléfono Erróneo (Captación Móvil)</td><td class="t" style="left:1400.17px;top:904px;font-size:13.5px;letter-spacing:0.18px;color:#2a2a2a;">Cliente (Entidad)</td><td><div class="b" style="left:1644.2px;top:896.3px;width:80.8px;height:27.5px;background:#6cd400;border-radius:4px;"></div><span class="t" style="left:1654.67px;top:903px;font-size:13.5px;letter-spacing:0.02px;color:#fff;-webkit-text-stroke:0.7px #fff;">Publicado</span></td></tr></tbody></table><svg class="i" style="left:1327.9px;top:722.9px;width:20.4px;height:25.8px;" viewBox="520 240 380 480" preserveAspectRatio="none" aria-hidden="true"><path fill="#fff" stroke="#0d0d14" stroke-width="19" stroke-linejoin="round" d="M642 535 V294 a31 31 0 0 1 62 0 V358 q28 -10 52 12 q30 -6 54 16 q38 -2 58 36 V580 q-6 92 -130 118 q-60 0 -112 -62 L556 546 q-22 -30 8 -50 q32 -12 78 39 Z"/><path stroke="#0d0d14" stroke-width="17" d="M703 352 V462 M757 372 V464 M811 390 V468" fill="none" stroke-linecap="round"/></svg></section>
</main>
</div>
</body></html>
